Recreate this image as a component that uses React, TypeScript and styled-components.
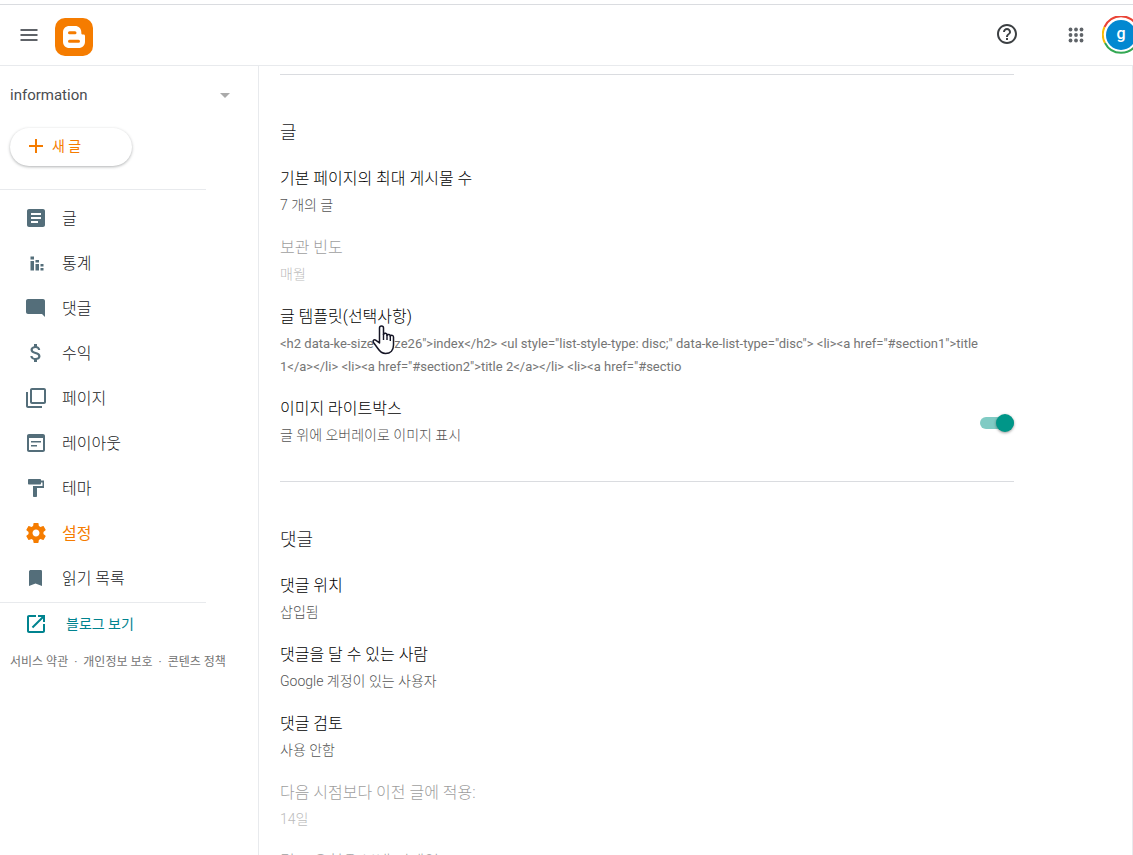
import React from "react";
import styled, { createGlobalStyle, css } from "styled-components";

const Global = createGlobalStyle`
  * { box-sizing: border-box; }
  body {
    margin: 0;
    background: #fff;
    font-family: Roboto, "Noto Sans CJK KR", sans-serif;
    color: #202124;
  }
  h2, h3, p, ul { margin: 0; padding: 0; font-weight: 400; }
  a { text-decoration: none; color: inherit; }
  button { font: inherit; border: 0; padding: 0; background: none; cursor: pointer; }
`;

const Shell = styled.div`
  display: flex;
  flex-direction: column;
  height: 100vh;
  overflow: hidden;
  padding-top: 4px;
`;

const Header = styled.header`
  display: flex;
  align-items: center;
  flex: none;
  height: 62px;
  padding-left: 17px;
  border-top: 1px solid #dadce0;
  border-bottom: 1px solid #e8eaed;
`;

const IconButton = styled.button`
  display: flex;
  align-items: center;
  justify-content: center;
  flex: none;
  width: 24px;
  height: 24px;
  color: #5f6368;
`;

const Logo = styled.a`
  display: flex;
  flex: none;
  margin: 3px auto 0 14px;
`;

const HeaderTools = styled.div`
  display: flex;
  align-items: center;
  flex: none;
`;

const HelpButton = styled(IconButton)`
  color: #3c4043;
  margin: 0 45px 3px 0;
`;

const Avatar = styled.button`
  display: flex;
  flex: none;
  margin: 0 -7px 0 14px;
`;

const Body = styled.div`
  display: flex;
  flex: 1;
  min-height: 0;
`;

const Sidebar = styled.aside`
  flex: none;
  width: 259px;
  border-right: 1px solid #e8eaed;
`;

const BlogPicker = styled.button`
  display: flex;
  align-items: center;
  justify-content: space-between;
  width: 100%;
  height: 24px;
  margin-top: 17px;
  padding: 0 28px 0 10px;
  font-size: 15px;
  color: #4a4d51;
`;

const Label = styled.span`
  padding-bottom: 2px;
`;

const NewPost = styled.button`
  display: flex;
  align-items: center;
  gap: 8px;
  width: 122px;
  height: 38px;
  margin: 21px 0 0 10px;
  padding: 0 0 2px 18px;
  border-radius: 19px;
  font-size: 14px;
  color: #f57c00;
  background: #fff;
  box-shadow: 0 1px 3px rgba(60, 64, 67, 0.4);
`;

const Divider = styled.div`
  width: 206px;
  height: 1px;
  background: #e8eaed;
`;

const Nav = styled.nav`
  margin-top: 23px;
  ul { list-style: none; padding: 5px 0 2px; }
`;

const NavLink = styled.a<{ $active?: boolean }>`
  display: flex;
  align-items: center;
  gap: 14px;
  height: 45px;
  padding-left: 24px;
  font-size: 16px;
  font-weight: ${(p) => (p.$active ? 400 : 300)};
  color: ${(p) => (p.$active ? "#f57c00" : "#202124")};
  svg { color: ${(p) => (p.$active ? "#f57c00" : "#546e7a")}; }
`;

const ViewBlog = styled.a`
  display: flex;
  align-items: center;
  gap: 18px;
  height: 41px;
  padding-left: 24px;
  font-size: 14px;
  color: #00838f;
`;

const Legal = styled.footer`
  display: flex;
  gap: 6px;
  margin-top: 8px;
  padding-left: 10px;
  font-size: 12px;
  line-height: 20px;
  color: #757575;
  white-space: nowrap;
`;

const Main = styled.main`
  flex: 1;
  min-width: 0;
  overflow-y: auto;
  scrollbar-width: none;
  padding: 8px 118px 0 21px;
  border-right: 1px solid #e8eaed;
`;

const Section = styled.section`
  display: flex;
  flex-direction: column;
  gap: 20px;
  border-top: 1px solid #dadce0;
  padding: 45px 0 34px;
`;

const SectionTitle = styled.h2`
  font-size: 18px;
  line-height: 26px;
  font-weight: 300;
  margin-bottom: 2px;
`;

const Row = styled.div<{ $disabled?: boolean }>`
  display: flex;
  align-items: center;
  justify-content: space-between;
  position: relative;
  ${(p) => p.$disabled && css`opacity: 0.4;`}
`;

const RowTitle = styled.h3`
  font-size: 16px;
  line-height: 22px;
  font-weight: 300;
  color: #000;
`;

const RowText = styled.p<{ $markup?: boolean }>`
  margin-top: 4px;
  font-size: ${(p) => (p.$markup ? 13 : 14)}px;
  line-height: 23px;
  font-weight: ${(p) => (p.$markup ? 400 : 300)};
  color: ${(p) => (p.$markup ? "#757575" : "#555")};
`;

const Switch = styled.input`
  appearance: none;
  flex: none;
  position: relative;
  width: 34px;
  height: 18px;
  margin: 0;
  cursor: pointer;
  &::before {
    content: "";
    position: absolute;
    inset: 3px 0;
    border-radius: 6px;
    background: #80cbc4;
  }
  &::after {
    content: "";
    position: absolute;
    top: 0;
    right: 0;
    width: 18px;
    height: 18px;
    border-radius: 50%;
    background: #009688;
    box-shadow: 0 1px 3px rgba(0, 0, 0, 0.4);
  }
  &:not(:checked)::before { background: #bdbdbd; }
  &:not(:checked)::after { right: 16px; background: #fafafa; }
`;

const Pointer = styled.svg`
  position: absolute;
  left: 91px;
  top: 18px;
`;

const Glyph = ({ d, size = 24 }: { d: string; size?: number }) => (
  <svg width={size} height={size} viewBox="0 0 24 24" fill="currentColor" aria-hidden="true">
    <path d={d} fillRule="evenodd" />
  </svg>
);

const nav = [
  { label: "글", d: "M19 3H5c-1.100 0-2 .9-2 2v14c0 1.100.9 2 2 2h14c1.100 0 2-.9 2-2V5c0-1.100-.9-2-2-2zm-5 14H7v-2h7v2zm3-4H7v-2h10v2zm0-4H7V7h10v2z" },
  { label: "통계", d: "M6.500 5.500h3.500v3H6.500zM6.500 10h3.500v9.500H6.500zM11.500 9h3.500v2.500H11.500zM11.500 13h3.500v6.500H11.500zM16.500 13h3v2.500h-3zM16.500 17h3v2.500h-3z" },
  { label: "댓글", d: "M20.990 5c0-1.100-.89-2-1.990-2H4c-1.100 0-2 .9-2 2v11c0 1.100.9 2 2 2h14l3 3-.010-16z" },
  { label: "수익", d: "M11.800 10.900c-2.270-.59-3-1.200-3-2.150 0-1.090 1.010-1.850 2.700-1.850 1.780 0 2.440.85 2.500 2.100h2.210c-.07-1.720-1.120-3.300-3.210-3.810V3h-3v2.160c-1.940.42-3.500 1.680-3.500 3.610 0 2.310 1.910 3.460 4.700 4.130 2.500.6 3 1.480 3 2.410 0 .69-.49 1.790-2.700 1.790-2.060 0-2.870-.92-2.980-2.100h-2.200c.12 2.190 1.760 3.420 3.680 3.830V21h3v-2.150c1.950-.37 3.500-1.500 3.500-3.550 0-2.840-2.430-3.810-4.700-4.400z" },
  { label: "페이지", d: "M20 2H8C6.900 2 6 2.900 6 4v12c0 1.100.9 2 2 2h12c1.100 0 2-.9 2-2V4c0-1.100-.9-2-2-2zm0 14H8V4h12v12zM4 6H2v14c0 1.100.9 2 2 2h14v-2H4V6z" },
  { label: "레이아웃", d: "M19 3H5c-1.110 0-2 .9-2 2v14c0 1.100.89 2 2 2h14c1.100 0 2-.9 2-2V5c0-1.100-.89-2-2-2zm0 16H5V7h14v12zM17 11.500H7V10h10zM13 15.500H7V14h6z" },
  { label: "테마", d: "M17 4.500V4c0-.55-.45-1-1-1H5c-.55 0-1 .45-1 1v3.500c0 .55.45 1 1 1h11c.55 0 1-.45 1-1V6.500h1.500v3.500H9v10c0 .55.45 1 1 1h2c.55 0 1-.45 1-1v-8h7V4.500h-3z" },
  { label: "설정", active: true, d: "M19.430 12.980c.04-.32.07-.64.07-.98s-.03-.66-.07-.98l2.110-1.650c.19-.15.24-.42.12-.64l-2-3.460c-.12-.22-.39-.3-.61-.22l-2.490 1c-.52-.4-1.080-.73-1.690-.98l-.38-2.650C14.460 2.180 14.250 2 14 2h-4c-.25 0-.46.18-.49.42l-.38 2.650c-.61.25-1.170.59-1.690.98l-2.490-1c-.23-.09-.49 0-.61.22l-2 3.460c-.13.22-.07.49.12.64l2.110 1.650c-.04.32-.07.65-.07.98s.03.66.07.98l-2.110 1.650c-.19.15-.24.42-.12.64l2 3.460c.12.22.39.3.61.22l2.490-1c.52.4 1.080.73 1.690.98l.38 2.650c.03.24.24.42.49.42h4c.25 0 .46-.18.49-.42l.38-2.650c.61-.25 1.170-.59 1.690-.98l2.490 1c.23.09.49 0 .61-.22l2-3.460c.12-.22.07-.49-.12-.64l-2.110-1.650zM12 15.500c-1.930 0-3.500-1.570-3.500-3.500s1.570-3.500 3.500-3.500 3.500 1.570 3.500 3.500-1.570 3.500-3.500 3.500z" },
  { label: "읽기 목록", d: "M17 4H7c-1.100 0-1.990.7-1.990 1.500L5 20l6.500-2.500L18 20V5.500c0-.8-.5-1.500-1-1.500z" },
];

type Setting = { title: string; text?: string; disabled?: boolean; toggle?: boolean; markup?: boolean };

const sections: { title: string; rows: Setting[] }[] = [
  {
    title: "글",
    rows: [
      { title: "기본 페이지의 최대 게시물 수", text: "7 개의 글" },
      { title: "보관 빈도", text: "매월", disabled: true },
      {
        title: "글 템플릿(선택사항)",
        text: '<h2 data-ke-size="size26">index</h2> <ul style="list-style-type: disc;" data-ke-list-type="disc"> <li><a href="#section1">title 1</a></li> <li><a href="#section2">title 2</a></li> <li><a href="#sectio',
        markup: true,
      },
      { title: "이미지 라이트박스", text: "글 위에 오버레이로 이미지 표시", toggle: true },
    ],
  },
  {
    title: "댓글",
    rows: [
      { title: "댓글 위치", text: "삽입됨" },
      { title: "댓글을 달 수 있는 사람", text: "Google 계정이 있는 사용자" },
      { title: "댓글 검토", text: "사용 안함" },
      { title: "다음 시점보다 이전 글에 적용:", text: "14일", disabled: true },
      { title: "검토 요청을 보낼 이메일", disabled: true },
    ],
  },
];

const HandPointer = () => (
  <Pointer width="24" height="32" viewBox="0 0 24 32" aria-hidden="true">
    <path
      d="M8.500 19V4a2 2 0 0 1 4 0v6.500a1.800 1.800 0 0 1 3.500.8a1.800 1.800 0 0 1 3.300.9a1.700 1.700 0 0 1 3.200 1V21c0 5-3 8.500-8 8.500c-4 0-6-2.500-8-5.500l-4-5.500c-1.300-2 .8-3.500 2.500-2.200z"
      fill="#fff"
      stroke="#151525"
      strokeWidth="1.500"
      strokeLinejoin="round"
    />
    <path d="M12.500 10v6M16 11v5M19.300 12v5" stroke="#151525" strokeWidth="1.400" />
  </Pointer>
);

export default function App() {
  return (
    <Shell>
      <Global />
      <Header>
        <IconButton aria-label="메뉴">
          <Glyph d="M3.500 6h17v2h-17zM3.500 11h17v2h-17zM3.500 16h17v2h-17z" />
        </IconButton>
        <Logo href="#home" aria-label="Blogger">
          <svg width="38" height="38" viewBox="0 0 38 38">
            <rect width="38" height="38" rx="10" fill="#f57c00" />
            <path
              d="M14.500 8H20c3.800 0 6.300 2.600 6.300 6v1c.1 1 .6 1.500 1.600 1.500h.7c.9 0 1.400.6 1.400 1.500v5.500c0 4-2.600 6.500-6.500 6.500h-9C10.500 30 8 27.500 8 23.500v-9C8 10.600 10.500 8 14.500 8z"
              fill="#fff"
            />
            <path d="M14.500 14.800h5.500M14.500 23.200h9" stroke="#f57c00" strokeWidth="3" strokeLinecap="round" />
          </svg>
        </Logo>
        <HeaderTools>
          <HelpButton aria-label="도움말">
            <Glyph d="M11 18h2v-2h-2v2zm1-16C6.480 2 2 6.480 2 12s4.480 10 10 10 10-4.480 10-10S17.520 2 12 2zm0 18c-4.410 0-8-3.590-8-8s3.590-8 8-8 8 3.590 8 8-3.590 8-8 8zm0-14c-2.210 0-4 1.790-4 4h2c0-1.100.9-2 2-2s2 .9 2 2c0 2-3 1.750-3 5h2c0-2.250 3-2.500 3-5 0-2.210-1.790-4-4-4z" />
          </HelpButton>
          <IconButton aria-label="앱">
            <svg width="24" height="24" viewBox="0 0 24 24" fill="currentColor">
              {[6.5, 12, 17.5].map((y) => [6.5, 12, 17.5].map((x) => <circle key={`${x}-${y}`} cx={x} cy={y} r="1.900" />))}
            </svg>
          </IconButton>
          <Avatar aria-label="계정">
            <svg width="38" height="38" viewBox="0 0 38 38">
              <g fill="none" strokeWidth="2">
                <path d="M2.500 11A18 18 0 0 1 35.500 11" stroke="#ea4335" />
                <path d="M2.500 11A18 18 0 0 0 3 27" stroke="#fbbc04" />
                <path d="M3 27A18 18 0 0 0 35 27" stroke="#34a853" />
                <path d="M35 27A18 18 0 0 0 35.500 11" stroke="#4285f4" />
              </g>
              <circle cx="19" cy="19" r="15" fill="#0288d1" />
              <text x="19" y="23" textAnchor="middle" fontSize="16" fontFamily="Roboto, sans-serif" fontWeight="500" fill="#fff">g</text>
            </svg>
          </Avatar>
        </HeaderTools>
      </Header>
      <Body>
        <Sidebar>
          <BlogPicker>
            information
            <svg width="10" height="5" viewBox="0 0 10 5" aria-hidden="true"><path d="M0 0h10L5 5z" fill="#aaa" /></svg>
          </BlogPicker>
          <NewPost>
            <svg width="16" height="16" viewBox="0 0 16 16" aria-hidden="true"><path d="M1 8h14M8 1v14" stroke="#f57c00" strokeWidth="2" /></svg>
            <Label>새 글</Label>
          </NewPost>
          <Nav>
            <Divider />
            <ul>
              {nav.map((n) => (
                <li key={n.label}>
                  <NavLink href="#nav" $active={n.active}><Glyph d={n.d} /><Label>{n.label}</Label></NavLink>
                </li>
              ))}
            </ul>
          </Nav>
          <Divider />
          <ViewBlog href="#view">
            <Glyph d="M19 19H5V5h7V3H5c-1.110 0-2 .9-2 2v14c0 1.100.89 2 2 2h14c1.100 0 2-.9 2-2v-7h-2v7zM14 3v2h3.590l-9.830 9.830 1.410 1.410L19 6.410V10h2V3h-7z" />
            <Label>블로그 보기</Label>
          </ViewBlog>
          <Legal>
            <a href="#terms">서비스 약관</a><span>·</span>
            <a href="#privacy">개인정보 보호</a><span>·</span>
            <a href="#content">콘텐츠 정책</a>
          </Legal>
        </Sidebar>
        <Main>
          {sections.map((s) => (
            <Section key={s.title}>
              <SectionTitle>{s.title}</SectionTitle>
              {s.rows.map((r) => (
                <Row key={r.title} $disabled={r.disabled}>
                  <div>
                    <RowTitle>{r.title}</RowTitle>
                    {r.text && <RowText $markup={r.markup}>{r.text}</RowText>}
                  </div>
                  {r.toggle && <Switch type="checkbox" defaultChecked aria-label={r.title} />}
                  {r.markup && <HandPointer />}
                </Row>
              ))}
            </Section>
          ))}
        </Main>
      </Body>
    </Shell>
  );
}
